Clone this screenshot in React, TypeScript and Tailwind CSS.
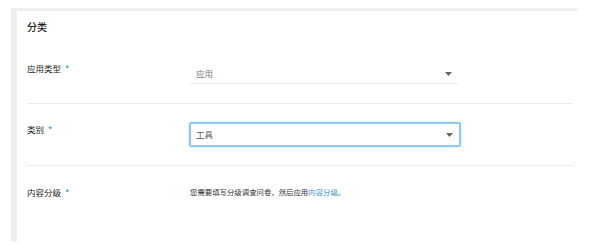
import React from 'react';

const Arrow = () => (
  <svg width="7" height="4" viewBox="0 0 7 4" className="shrink-0">
    <path d="M0 0h7L3.5 4z" fill="#666" />
  </svg>
);

const Req = () => <span className="ml-[4px] font-bold text-[#4aa3d6]">*</span>;

export default function App() {
  return (
    <div
      className="h-[245px] w-[600px] bg-white pl-[11px] pt-[8px]"
      style={{ fontFamily: '"Noto Sans CJK SC", "Noto Sans", sans-serif' }}
    >
      <div className="h-[234px] w-[566px] bg-[#efefef] pl-[6px] pt-[3px]">
        <div className="h-full bg-white pl-[10px] pr-[4px]">
          <div className="h-[44px] pt-[9px] text-[10px] font-medium leading-[14px] text-[#222]">分类</div>

          {/* 应用类型 */}
          <div className="flex h-[49px] border-b border-[#ececec]">
            <div className="w-[163px] pt-[7px] text-[8.5px] leading-[12px] text-[#222]">
              应用类型<Req />
            </div>
            <div className="mt-[7px] flex h-[22px] w-[268px] items-center justify-between border-b border-[#ececec] pl-[6px] pr-[6px] pt-[2px]">
              <span className="text-[8.5px] text-[#777]">应用</span>
              <Arrow />
            </div>
          </div>

          {/* 类别 */}
          <div className="flex h-[62px] border-b border-[#ececec]">
            <div className="w-[162px] pt-[19px] text-[8.5px] leading-[12px] text-[#222]">
              类别<Req />
            </div>
            <div className="mt-[18px] flex h-[25px] w-[272px] items-center justify-between rounded-[2px] border-2 border-[#8ccbed] pl-[5px] pr-[6px] shadow-[0_0_2px_#9fd3f0]">
              <span className="text-[8.5px] text-[#555]">工具</span>
              <Arrow />
            </div>
          </div>

          {/* 内容分级 */}
          <div className="flex">
            <div className="w-[163px] pt-[20px] text-[8.5px] leading-[12px] text-[#222]">
              内容分级<Req />
            </div>
            <div className="pt-[20px] text-[7.4px] leading-[12px] text-[#333]">
              您需要填写分级调查问卷，然后应用<span className="text-[#3593c5]">内容分级</span>。
            </div>
          </div>
        </div>
      </div>
    </div>
  );
}
